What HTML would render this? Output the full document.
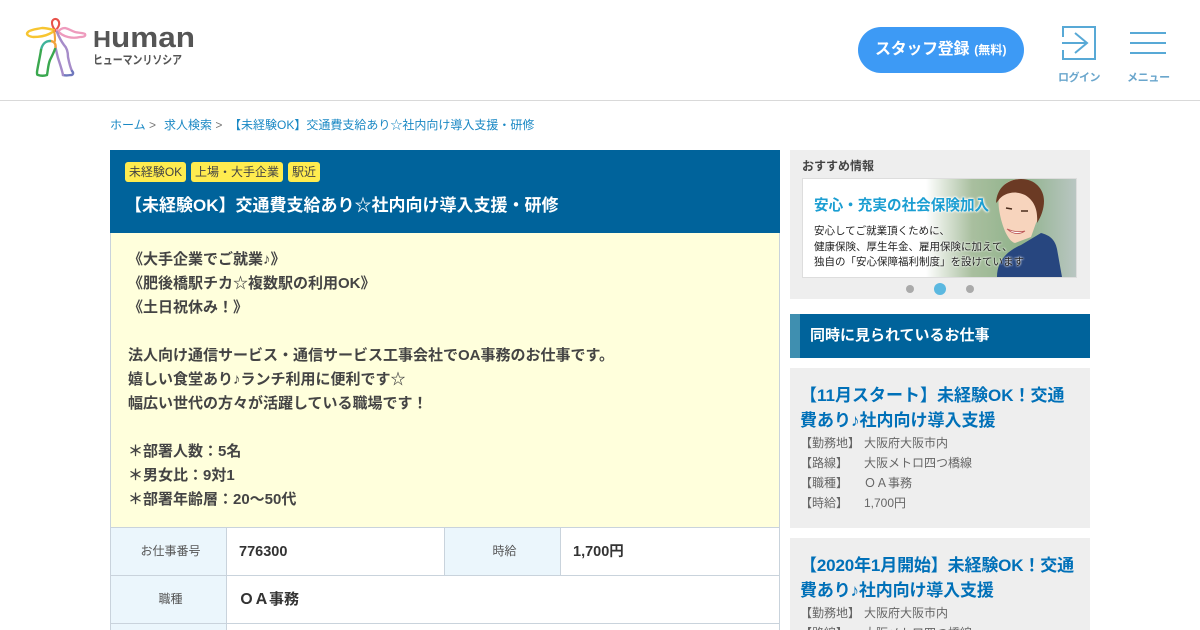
<!DOCTYPE html>
<html lang="ja"><head><meta charset="utf-8"><title>Human</title>
<style>
*{box-sizing:border-box}
html,body{margin:0;padding:0;width:1200px;height:630px;overflow:hidden;background:#fff}
body{font-family:"Liberation Sans","Noto Sans CJK JP",sans-serif;color:#333;position:relative}
.a{position:absolute;white-space:nowrap}
.tag{position:absolute;top:162px;height:20px;line-height:20px;background:#ffec4f;border-radius:3px;font-size:12px;color:#444;text-align:center}
.cell{position:absolute;border-right:1px solid #c9d3dc;border-bottom:1px solid #c9d3dc;overflow:hidden}
.th{background:#ebf6fc;font-size:12px;color:#555;text-align:center;line-height:47px;padding-left:4px}
.td{background:#fff;font-size:14.5px;font-weight:bold;line-height:48px;padding-left:12px;color:#333}
.card{position:absolute;left:790px;width:300px;background:#eee;padding:15px 10px 0;overflow:hidden}
.card h3{margin:0;font-size:17px;line-height:25px;color:#0070b8;font-weight:bold;white-space:nowrap}
.card p{margin:0;font-size:12px;line-height:20px;color:#666;position:relative;padding-left:64px;white-space:nowrap}
.card p span{position:absolute;left:0}
</style></head><body>

<!-- header -->
<div class="a" style="left:0;top:100px;width:1200px;height:1px;background:#d9d9d9"></div>
<svg class="a" style="left:0;top:0" width="200" height="85" viewBox="0 0 200 85" fill="none" stroke-linecap="round" stroke-linejoin="round">
<path d="M56 31C52 27 51 22 53 20C55 18 58 19 59 22C60 25 58 28 55 31" stroke="#e8524a" stroke-width="2.100"/>
<path d="M54 30C50 29 46 28 42 28C36 29 30 30 28 32C26 34 27 36 33 37C38 37 45 36 49 34C51 33 53 32 54 31" stroke="#f7c531" stroke-width="2.400"/>
<path d="M58 32C60 29 63 28 65 28C69 29 72 31 75 32C79 33 84 33 85 34C86 36 84 37 80 37C76 38 72 38 68 37C64 36 60 34 57 30" stroke="#ee9bbd" stroke-width="2.300"/>
<path d="M54 31C55 34 55 38 55 41" stroke="#f2a33a" stroke-width="2.100"/>
<path d="M57 32C59 37 61 41 64 45C67 48 68 52 68 57C69 62 70 67 72 71" stroke="#a68cc9" stroke-width="2.400"/>
<path d="M72 71C74 73 73 75 71 75C68 75.500 65 75.500 63 75" stroke="#6f78bd" stroke-width="2.400"/>
<path d="M63 75C62 70 60 64 58 58C57 54 56 50 55.500 47" stroke="#a68cc9" stroke-width="2.400"/>
<path d="M55.500 47C56 44 54 41 50 41" stroke="#f2a33a" stroke-width="2.400"/>
<path d="M50 41C45 41 42 45 41 50" stroke="#3fb39a" stroke-width="2.400"/>
<path d="M41 50C40 57 38 65 37 72C37 74 37 75 38 75C41 76 44 76 47 75C48 70 48 65 50 60C52 56 54 52 55 49" stroke="#3aa84f" stroke-width="2.400"/>
<text x="93" y="47" font-family="Liberation Sans" font-weight="bold" font-size="29" fill="#555" textLength="102" lengthAdjust="spacingAndGlyphs"><tspan font-size="23">H</tspan>uman</text>
<text x="93" y="64" font-family="Liberation Sans,Noto Sans CJK JP" font-weight="bold" font-size="12" fill="#555" textLength="89" lengthAdjust="spacingAndGlyphs">ヒューマンリソシア</text>
</svg>

<div class="a" style="left:858px;top:27px;width:166px;height:46px;border-radius:23px;background:#3d9af5;color:#fff;font-weight:bold;font-size:16px;line-height:46px;padding-left:17px;letter-spacing:-.3px">スタッフ登録<span style="font-size:12px;margin-left:5px;letter-spacing:.1px">(無料)</span></div>

<svg class="a" style="left:1055px;top:22px" width="120" height="42" fill="none" stroke="#58a9d6" stroke-width="2">
<path d="M8 15V5H40V37H8V28"/>
<path d="M7 21H32M20 11L32 21L20 31"/>
<path d="M75 11H111M75 21H111M75 31H111"/>
</svg>
<div class="a" style="left:1058px;top:70px;font-size:11px;line-height:16px;color:#6aa6cc;font-weight:bold;letter-spacing:-.5px">ログイン</div>
<div class="a" style="left:1127px;top:70px;font-size:11px;line-height:16px;color:#6aa6cc;font-weight:bold;letter-spacing:-.3px">メニュー</div>

<!-- breadcrumb -->
<div class="a" style="left:110px;top:116px;font-size:12px;line-height:18px;color:#1a88c4">ホーム<span style="color:#777"> &gt;</span></div>
<div class="a" style="left:164px;top:116px;font-size:12px;line-height:18px;color:#1a88c4">求人検索<span style="color:#777"> &gt;</span></div>
<div class="a" style="left:229px;top:116px;font-size:12px;line-height:18px;color:#1a88c4">【未経験OK】交通費支給あり☆社内向け導入支援・研修</div>

<!-- main -->
<div class="a" style="left:110px;top:150px;width:670px;height:83px;background:#00639b"></div>
<div class="tag" style="left:125px;width:61px">未経験OK</div>
<div class="tag" style="left:191px;width:92px">上場・大手企業</div>
<div class="tag" style="left:288px;width:32px">駅近</div>
<div class="a" style="left:125px;top:193px;font-size:17px;line-height:26px;font-weight:bold;color:#fff">【未経験OK】交通費支給あり☆社内向け導入支援・研修</div>

<div class="a" style="left:110px;top:233px;width:670px;height:295px;background:#ffffdc;border-left:1px solid #c9d3dc;border-right:1px solid #c9d3dc;border-bottom:1px solid #c9d3dc"></div>
<div class="a" style="left:128px;top:248px;font-size:15px;line-height:24px;font-weight:bold;color:#444">《大手企業でご就業♪》<br>《肥後橋駅チカ☆複数駅の利用OK》<br>《土日祝休み！》<br><br>法人向け通信サービス・通信サービス工事会社でOA事務のお仕事です。<br>嬉しい食堂あり♪ランチ利用に便利です☆<br>幅広い世代の方々が活躍している職場です！<br><br>＊部署人数：5名<br>＊男女比：9対1<br>＊部署年齢層：20～50代</div>

<div class="cell th" style="left:110px;top:528px;width:117px;height:48px;border-left:1px solid #c9d3dc">お仕事番号</div>
<div class="cell td" style="left:227px;top:528px;width:218px;height:48px">776300</div>
<div class="cell th" style="left:445px;top:528px;width:116px;height:48px">時給</div>
<div class="cell td" style="left:561px;top:528px;width:219px;height:48px">1,700円</div>
<div class="cell th" style="left:110px;top:576px;width:117px;height:48px;border-left:1px solid #c9d3dc">職種</div>
<div class="cell td" style="left:227px;top:576px;width:553px;height:48px;font-size:15px;line-height:47px">ＯＡ事務</div>
<div class="cell th" style="left:110px;top:624px;width:117px;height:6px;border-left:1px solid #c9d3dc;border-bottom:0"></div>
<div class="cell td" style="left:227px;top:624px;width:553px;height:6px;border-bottom:0"></div>

<!-- sidebar -->
<div class="a" style="left:790px;top:150px;width:300px;height:149px;background:#eee"></div>
<div class="a" style="left:802px;top:157px;font-size:12px;line-height:18px;font-weight:bold;color:#444">おすすめ情報</div>
<div class="a" style="left:802px;top:178px;width:275px;height:100px;background:#fff;border:1px solid #ddd;overflow:hidden">
<svg width="273" height="98" style="position:absolute;left:0;top:0">
<defs><linearGradient id="bg" x1="0" x2="1" y1="0" y2="0"><stop offset="0" stop-color="#fff"/><stop offset=".45" stop-color="#fff"/><stop offset=".62" stop-color="#a9bf9f"/><stop offset=".8" stop-color="#8fb28a"/><stop offset="1" stop-color="#b9c6c2"/></linearGradient></defs>
<rect width="273" height="98" fill="url(#bg)"/>
<path d="M194 98C194 82 204 72 218 66L238 54C246 56 252 60 254 70L259 98Z" fill="#27467f"/>
<path d="M196 30C193 6 205 1 216 0C230 0 240 8 240 20C240 28 238 36 233 44L228 58L212 64C204 62 198 44 196 30Z" fill="#f7d4bd"/>
<path d="M193 24C194 6 208 0 218 0C232 0 241 10 241 22C241 30 238 38 234 44C235 32 232 22 222 16C212 11 200 14 195 22Z" fill="#6b3a24"/>
<path d="M204 50Q213 58 222 52Q213 54 204 50Z" fill="#fff" stroke="#b55" stroke-width=".8"/>
<path d="M203 29l6 1M218 32l7 0" stroke="#4a2c1c" stroke-width="1.6"/>
</svg>
<div style="position:absolute;left:11px;top:17px;font-size:14.6px;line-height:20px;font-weight:bold;color:#1b9ed2;white-space:nowrap;text-shadow:0 0 2px #fff,0 0 2px #fff,0 0 3px #fff">安心・充実の社会保険加入</div>
<div style="position:absolute;left:11px;top:45px;font-size:10.500px;line-height:15.500px;color:#222;white-space:nowrap;text-shadow:0 0 2px #fff,0 0 2px #fff">安心してご就業頂くために、<br>健康保険、厚生年金、雇用保険に加えて、<br>独自の「安心保障福利制度」を設けています</div>
</div>
<div class="a" style="left:906px;top:285px;width:8px;height:8px;border-radius:50%;background:#aaa"></div>
<div class="a" style="left:934px;top:283px;width:12px;height:12px;border-radius:50%;background:#5bb8e0"></div>
<div class="a" style="left:966px;top:285px;width:8px;height:8px;border-radius:50%;background:#aaa"></div>

<div class="a" style="left:790px;top:314px;width:300px;height:44px;background:#00639b;border-left:10px solid #3f8fb0;padding-left:10px;font-size:15px;line-height:44px;font-weight:bold;color:#fff">同時に見られているお仕事</div>

<div class="card" style="top:368px;height:160px">
<h3>【11月スタート】未経験OK！交通<br>費あり♪社内向け導入支援</h3>
<p><span>【勤務地】</span>大阪府大阪市内</p>
<p><span>【路線】</span>大阪メトロ四つ橋線</p>
<p><span>【職種】</span>ＯＡ事務</p>
<p><span>【時給】</span>1,700円</p>
</div>
<div class="card" style="top:538px;height:92px">
<h3 style="letter-spacing:-.15px">【2020年1月開始】未経験OK！交通<br>費あり♪社内向け導入支援</h3>
<p><span>【勤務地】</span>大阪府大阪市内</p>
<p><span>【路線】</span>大阪メトロ四つ橋線</p>
</div>
</body></html>
